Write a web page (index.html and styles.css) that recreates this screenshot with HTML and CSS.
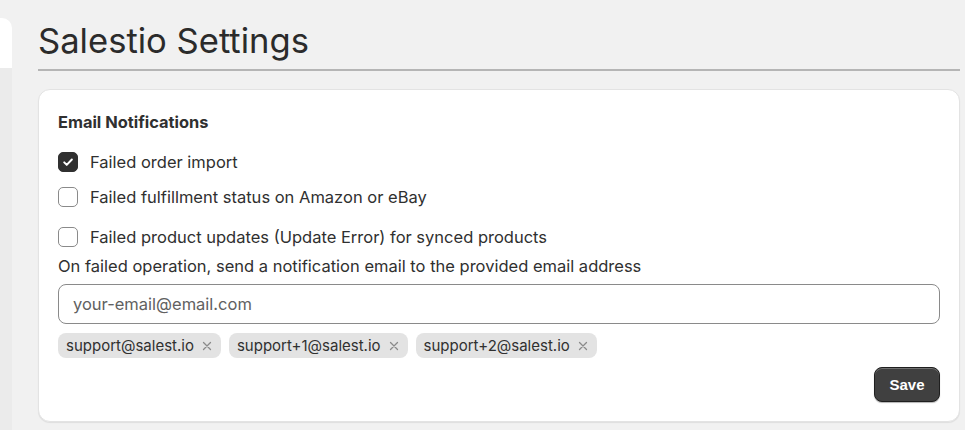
FILE: index.html
```html
<!DOCTYPE html>
<html>
<head>
<meta charset="utf-8">
<link rel="stylesheet" href="styles.css">
</head>
<body>
<div class="app">
  <aside class="side">
    <div class="side-top"></div>
    <div class="side-rest"></div>
  </aside>
  <main class="main">
    <h1 class="title">Salestio Settings</h1>
    <section class="card">
      <h2 class="card-title">Email Notifications</h2>
      <label class="check c1"><span class="box on"><svg viewBox="0 0 20 20" width="20" height="20"><path d="M5.8 10.4l2.8 2.8L14.3 7.2" fill="none" stroke="#fff" stroke-width="2.2" stroke-linecap="round" stroke-linejoin="round"/></svg></span>Failed order import</label>
      <label class="check c2"><span class="box"></span>Failed fulfillment status on Amazon or eBay</label>
      <label class="check c3"><span class="box"></span>Failed product updates (Update Error) for synced products</label>
      <p class="hint">On failed operation, send a notification email to the provided email address</p>
      <div class="input">your-email@email.com</div>
      <div class="chips">
        <span class="chip">support@salest.io<span class="x"><svg viewBox="0 0 10 10" width="10" height="10"><path d="M1.5 1.5l7 7M8.5 1.5l-7 7" stroke="#8a8a8a" stroke-width="1.3" stroke-linecap="round"/></svg></span></span>
        <span class="chip">support+1@salest.io<span class="x"><svg viewBox="0 0 10 10" width="10" height="10"><path d="M1.5 1.5l7 7M8.5 1.5l-7 7" stroke="#8a8a8a" stroke-width="1.3" stroke-linecap="round"/></svg></span></span>
        <span class="chip">support+2@salest.io<span class="x"><svg viewBox="0 0 10 10" width="10" height="10"><path d="M1.5 1.5l7 7M8.5 1.5l-7 7" stroke="#8a8a8a" stroke-width="1.3" stroke-linecap="round"/></svg></span></span>
      </div>
      <div class="actions"><button class="save">Save</button></div>
    </section>
  </main>
</div>
</body>
</html>
```
FILE: styles.css
```css
html, body { margin: 0; padding: 0; }
body {
  background: #f1f1f1;
  font-family: Inter, "Noto Sans", sans-serif;
  color: #303030;
  width: 965px;
  height: 430px;
  overflow: hidden;
}
.app { display: flex; height: 430px; }
.side { width: 12px; display: flex; flex-direction: column; padding-top: 18px; }
.side-top { height: 50px; background: #fff; border-top-right-radius: 10px; }
.side-rest { flex: 1; background: #ebebeb; }
.main { flex: 1; padding-left: 26px; padding-right: 5px; }
.title {
  margin: 0;
  font-size: 34.6px;
  font-weight: 400;
  line-height: 40px;
  padding-top: 20px;
  padding-bottom: 9px;
  border-bottom: 2px solid #b5b5b5;
  color: #2b2b2b;
}
.card {
  margin-top: 18px;
  background: #fff;
  border: 1px solid #e3e3e3;
  border-radius: 12px;
  box-shadow: 0 1px 1px rgba(0,0,0,0.08);
  padding: 22px 19px 19px 19px;
  height: 290px;
}
.card-title { margin: 0 0 19px; font-size: 16.4px; font-weight: 650; line-height: 20px; color: #303030; }
.check { display: flex; align-items: center; gap: 12px; font-size: 16.5px; line-height: 22px; color: #303030; }
.c1 { margin-bottom: 13px; }
.c2 { margin-bottom: 18px; }
.c3 { margin-bottom: 7px; }
.box {
  width: 18px; height: 18px;
  border: 1px solid #8a8a8a;
  border-radius: 5px;
  box-sizing: content-box;
  display: flex; align-items: center; justify-content: center;
  background: #fff;
}
.box.on { background: #303030; border-color: #303030; }
.box svg { width: 18px; height: 18px; }
.hint { margin: 0 0 7px; font-size: 16.5px; line-height: 22px; color: #303030; }
.input {
  height: 38px;
  border: 1px solid #8a8a8a;
  border-radius: 8px;
  padding: 0 14px;
  display: flex; align-items: center;
  font-size: 16.5px;
  color: #616161;
}
.chips { display: flex; gap: 8px; margin-top: 9px; }
.chip {
  display: flex; align-items: center;
  height: 25px;
  background: #e3e3e3;
  border-radius: 8px;
  padding: 0 9px 0 8px;
  font-size: 15px;
  color: #303030;
}
.x { margin-left: 8px; display: flex; align-items: center; }
.actions { display: flex; justify-content: flex-end; margin-top: 9px; }
.save {
  font-family: "Liberation Sans", Arial, sans-serif;
  font-weight: 700;
  font-size: 15px;
  color: #fff;
  background: #404040;
  border: 1px solid #1f1f1f;
  border-radius: 8px;
  width: 66px; height: 35px;
  box-shadow: inset 0 1px 0 rgba(255,255,255,0.25), 0 1px 1px rgba(0,0,0,0.3);
}
```
